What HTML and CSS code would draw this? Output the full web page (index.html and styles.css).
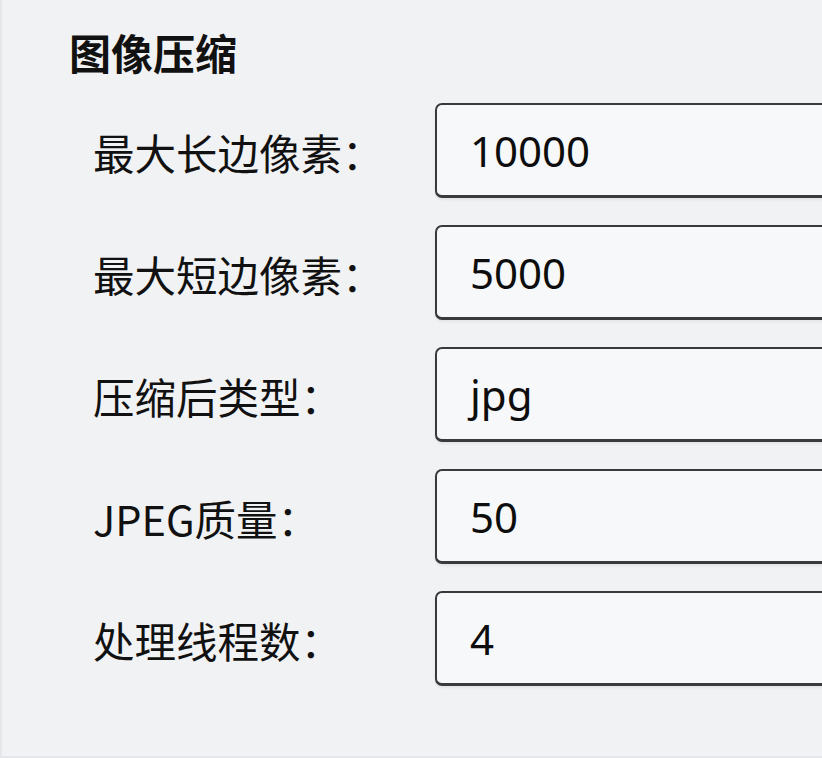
FILE: index.html
```html
<!DOCTYPE html>
<html lang="zh-CN">
<head>
<meta charset="utf-8">
<title>图像压缩</title>
<link rel="stylesheet" href="styles.css">
</head>
<body>
<div class="window">
  <section class="panel">
    <h2 class="title">图像压缩</h2>
    <div class="form">
      <div class="row">
        <div class="label">最大长边像素：</div>
        <div class="field">10000</div>
      </div>
      <div class="row">
        <div class="label">最大短边像素：</div>
        <div class="field">5000</div>
      </div>
      <div class="row">
        <div class="label">压缩后类型：</div>
        <div class="field">jpg</div>
      </div>
      <div class="row">
        <div class="label">JPEG质量：</div>
        <div class="field">50</div>
      </div>
      <div class="row">
        <div class="label">处理线程数：</div>
        <div class="field">4</div>
      </div>
    </div>
  </section>
</div>
</body>
</html>
```

FILE: styles.css
```css
html, body {
  margin: 0;
  padding: 0;
  width: 822px;
  height: 758px;
  overflow: hidden;
  background: #f1f2f4;
}

.window {
  width: 822px;
  height: 758px;
  box-sizing: border-box;
  border-left: 2px solid #e6e7ea;
  border-bottom: 2px solid #e6e7ea;
  overflow: hidden;
  font-family: "Noto Sans CJK SC", "Noto Sans", sans-serif;
  color: #111;
}

.panel {
  padding: 24px 0 0 67px;
}

.title {
  margin: 0;
  height: 56px;
  line-height: 56px;
  font-size: 42px;
  font-weight: 700;
  letter-spacing: 0;
}

.form {
  margin-top: 23px;
  display: flex;
  flex-direction: column;
  gap: 27px;
}

.row {
  display: flex;
  align-items: center;
  height: 95px;
}

.label {
  width: 366px;
  flex: none;
  padding-left: 24px;
  box-sizing: border-box;
  font-size: 41.5px;
  line-height: 50px;
  font-weight: 400;
  padding-top: 2px;
}

.field {
  flex: none;
  width: 520px;
  height: 95px;
  box-sizing: border-box;
  border: 2px solid #3a3a3c;
  border-bottom-width: 3px;
  border-radius: 7px;
  background: #f7f8fa;
  box-shadow: 0 2px 3px rgba(0, 0, 0, 0.06);
  padding-left: 33px;
  display: flex;
  align-items: center;
  font-family: "Noto Sans", "Open Sans", sans-serif;
  font-size: 42px;
  color: #0d0d0d;
}
```
